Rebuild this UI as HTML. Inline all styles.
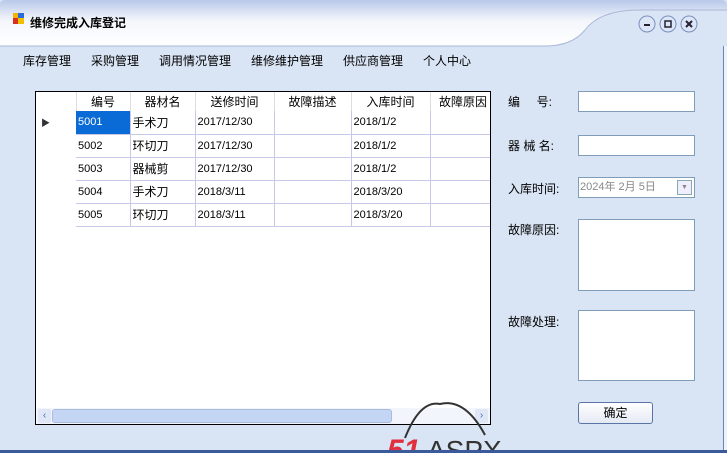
<!DOCTYPE html>
<html><head><meta charset="utf-8"><style>
*{margin:0;padding:0;box-sizing:border-box}
body{width:727px;height:453px;overflow:hidden;background:#d9e4f4;font-family:"Liberation Sans","Noto Sans CJK SC",sans-serif;font-size:12px;color:#000;position:relative}
.abs{position:absolute}
.menu span{position:absolute;top:52px;font-size:12px}
table{border-collapse:collapse;font-size:11px}
td{border-right:1px solid #c8c8e8;border-bottom:1px solid #c8c8e8;height:23px;padding-left:2px;white-space:nowrap;overflow:hidden}
th{font-weight:normal;height:19px;border-right:1px solid #ddd;font-size:12px;text-align:center;background:#fff}
.lbl{position:absolute;left:508px;font-size:12px}
.inp{position:absolute;left:578px;width:117px;background:#fff;border:1px solid #7f9db9}
</style></head><body>
<svg class="abs" style="left:0;top:0" width="727" height="50">
<defs><linearGradient id="g" x1="0" y1="0" x2="0" y2="1"><stop offset="0" stop-color="#b9c9ea"/><stop offset=".45" stop-color="#f4f6fb"/><stop offset="1" stop-color="#ffffff"/></linearGradient></defs>
<rect width="727" height="50" fill="#d9e4f4"/>
<path d="M0 4 Q0 0 6 0 L721 0 Q727 0 727 6 L727 10 L640 10 Q600 10 585 30 Q572 46 545 46 L0 46 Z" fill="url(#g)"/>
<path d="M0 46 L545 46 Q572 46 585 30 Q600 10 640 10 L727 10" fill="none" stroke="#aab8d8"/>
<rect x="13" y="13" width="5" height="5" fill="#f4b400"/><rect x="18" y="13" width="6" height="5" fill="#2a6ad8"/><rect x="13" y="18" width="5" height="6" fill="#d83020"/><rect x="18" y="18" width="6" height="6" fill="#f0c000"/>
<g fill="#dde6f6" stroke="#7a8fbf"><circle cx="647" cy="24" r="8"/><circle cx="668" cy="24" r="8"/><circle cx="689" cy="24" r="8"/></g>
<rect x="644" y="24" width="6" height="2" fill="#223"/>
<rect x="665" y="21" width="6" height="6" fill="none" stroke="#223" stroke-width="1.5"/>
<path d="M686 21 L692 27 M692 21 L686 27" stroke="#223" stroke-width="2"/>
</svg>
<div class="abs" style="left:30px;top:14px;font-size:12px;font-weight:bold">维修完成入库登记</div>
<div class="menu"><span style="left:23px">库存管理</span><span style="left:91px">采购管理</span><span style="left:159px">调用情况管理</span><span style="left:251px">维修维护管理</span><span style="left:343px">供应商管理</span><span style="left:423px">个人中心</span></div>

<div class="abs" style="left:35px;top:91px;width:456px;height:334px;background:#fff;border:1px solid #000;overflow:hidden">
<table style="table-layout:fixed;width:460px">
<colgroup><col style="width:40px"><col style="width:54px"><col style="width:65px"><col style="width:79px"><col style="width:77px"><col style="width:79px"><col style="width:66px"></colgroup>
<tr><th></th><th>编号</th><th>器材名</th><th>送修时间</th><th>故障描述</th><th>入库时间</th><th>故障原因</th></tr>
<tr><td style="border:none;padding-left:5px;font-size:9px;color:#333">▶</td><td style="background:#0a6ad6;color:#fff">5001</td><td style="font-size:12px">手术刀</td><td>2017/12/30</td><td></td><td>2018/1/2</td><td></td></tr>
<tr><td style="border:none"></td><td>5002</td><td style="font-size:12px">环切刀</td><td>2017/12/30</td><td></td><td>2018/1/2</td><td></td></tr>
<tr><td style="border:none"></td><td>5003</td><td style="font-size:12px">器械剪</td><td>2017/12/30</td><td></td><td>2018/1/2</td><td></td></tr>
<tr><td style="border:none"></td><td>5004</td><td style="font-size:12px">手术刀</td><td>2018/3/11</td><td></td><td>2018/3/20</td><td></td></tr>
<tr><td style="border:none"></td><td>5005</td><td style="font-size:12px">环切刀</td><td>2018/3/11</td><td></td><td>2018/3/20</td><td></td></tr>
</table>
<div class="abs" style="left:0;top:316px;width:454px;height:16px;background:#f2f5fb">
<div class="abs" style="left:2px;top:1px;width:13px;height:14px;background:#dfe7f7;border-radius:2px;color:#4a6ab0;font-size:10px;text-align:center;line-height:14px">‹</div>
<div class="abs" style="left:16px;top:1px;width:340px;height:14px;background:#c4d6f4;border:1px solid #a9bde0;border-radius:3px"></div>
<div class="abs" style="left:439px;top:1px;width:13px;height:14px;background:#dfe7f7;border-radius:2px;color:#4a6ab0;font-size:10px;text-align:center;line-height:14px">›</div>
</div></div>

<div class="lbl" style="top:93px">编&nbsp;&nbsp;&nbsp;&nbsp;&nbsp;号:</div>
<div class="lbl" style="top:137px">器 械 名:</div>
<div class="lbl" style="top:180px">入库时间:</div>
<div class="lbl" style="top:221px">故障原因:</div>
<div class="lbl" style="top:313px">故障处理:</div>
<div class="inp" style="top:91px;height:21px"></div>
<div class="inp" style="top:135px;height:21px"></div>
<div class="inp" style="top:177px;height:21px;color:#888;font-size:11px;line-height:19px;padding-left:1px">2024年 2月 5日
<div class="abs" style="right:2px;top:2px;width:15px;height:15px;border:1px solid #8aa;background:#eef;font-size:7px;text-align:center;line-height:14px">▼</div></div>
<div class="inp" style="top:219px;height:72px"></div>
<div class="inp" style="top:310px;height:71px"></div>
<div class="abs" style="left:578px;top:402px;width:75px;height:22px;border:1px solid #5a74a8;border-radius:3px;background:linear-gradient(#fff,#e4e9f4);text-align:center;line-height:20px">确定</div>

<svg class="abs" style="left:385px;top:400px" width="140" height="53">
<path d="M20 38 Q35 0 55 4 Q80 -2 100 35" fill="none" stroke="#333" stroke-width="2"/>
<text x="2" y="60" font-family="Liberation Sans" font-weight="bold" font-size="30" fill="#e03040" font-style="italic">51</text>
<text x="42" y="60" font-family="Liberation Sans" font-size="28" fill="#333">ASPX</text>
</svg>
<div class="abs" style="left:0;top:450px;width:727px;height:3px;background:#3a5a9a"></div>
<div class="abs" style="left:723px;top:46px;width:1px;height:404px;background:#6a85b8"></div>
<div class="abs" style="left:724px;top:46px;width:3px;height:404px;background:#eef3fb"></div>
</body></html>
